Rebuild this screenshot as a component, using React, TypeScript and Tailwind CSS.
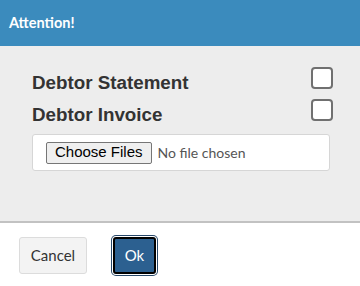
import React from "react";

const labels = ["Debtor Statement", "Debtor Invoice"];

export default function App() {
  return (
    <div className="w-[360px] h-[286px] flex flex-col bg-white font-['Lato',sans-serif]">
      <div className="h-[46px] shrink-0 bg-[#3b8bbd] px-[9px] flex items-center">
        <span className="text-white font-bold text-[14.5px]">Attention!</span>
      </div>

      <div className="h-[175px] shrink-0 bg-[#ededed] pt-[21px] pl-[32px] pr-[27px]">
        {labels.map((label) => (
          <div key={label} className="h-[32px] flex items-start justify-between">
            <span className="font-['Liberation_Sans',Arial,sans-serif] font-bold text-[18.8px] leading-[32px] text-[#333]">
              {label}
            </span>
            <span className="w-[22px] h-[22px] rounded-[4px] border-2 border-[#707070] bg-white" />
          </div>
        ))}

        <div className="mt-[3px] mr-[3px] h-[37px] bg-white border border-[#d6d6d6] rounded-[3px] pl-[13px] flex items-center gap-[6px]">
          <span className="h-[22px] px-[8px] flex items-center bg-[#efefef] border border-[#767676] rounded-[2px] font-['Liberation_Sans',Arial,sans-serif] text-[15px] text-black">
            Choose Files
          </span>
          <span className="text-[14px] text-[#555]">No file chosen</span>
        </div>
      </div>

      <div className="flex-1 border-t-2 border-[#c2c2c2] pt-[14px] pl-[19px] flex items-start gap-[26px]">
        <button className="w-[68px] h-[37px] bg-[#f3f3f3] border border-[#dcdcdc] rounded-[3px] text-[15px] text-[#333]">
          Cancel
        </button>
        <button className="w-[43px] h-[37px] bg-[#2c6090] border-2 border-black rounded-[3px] text-[15px] text-white shadow-[0_0_0_1px_#fff,0_0_0_2px_#27486a]">
          Ok
        </button>
      </div>
    </div>
  );
}
